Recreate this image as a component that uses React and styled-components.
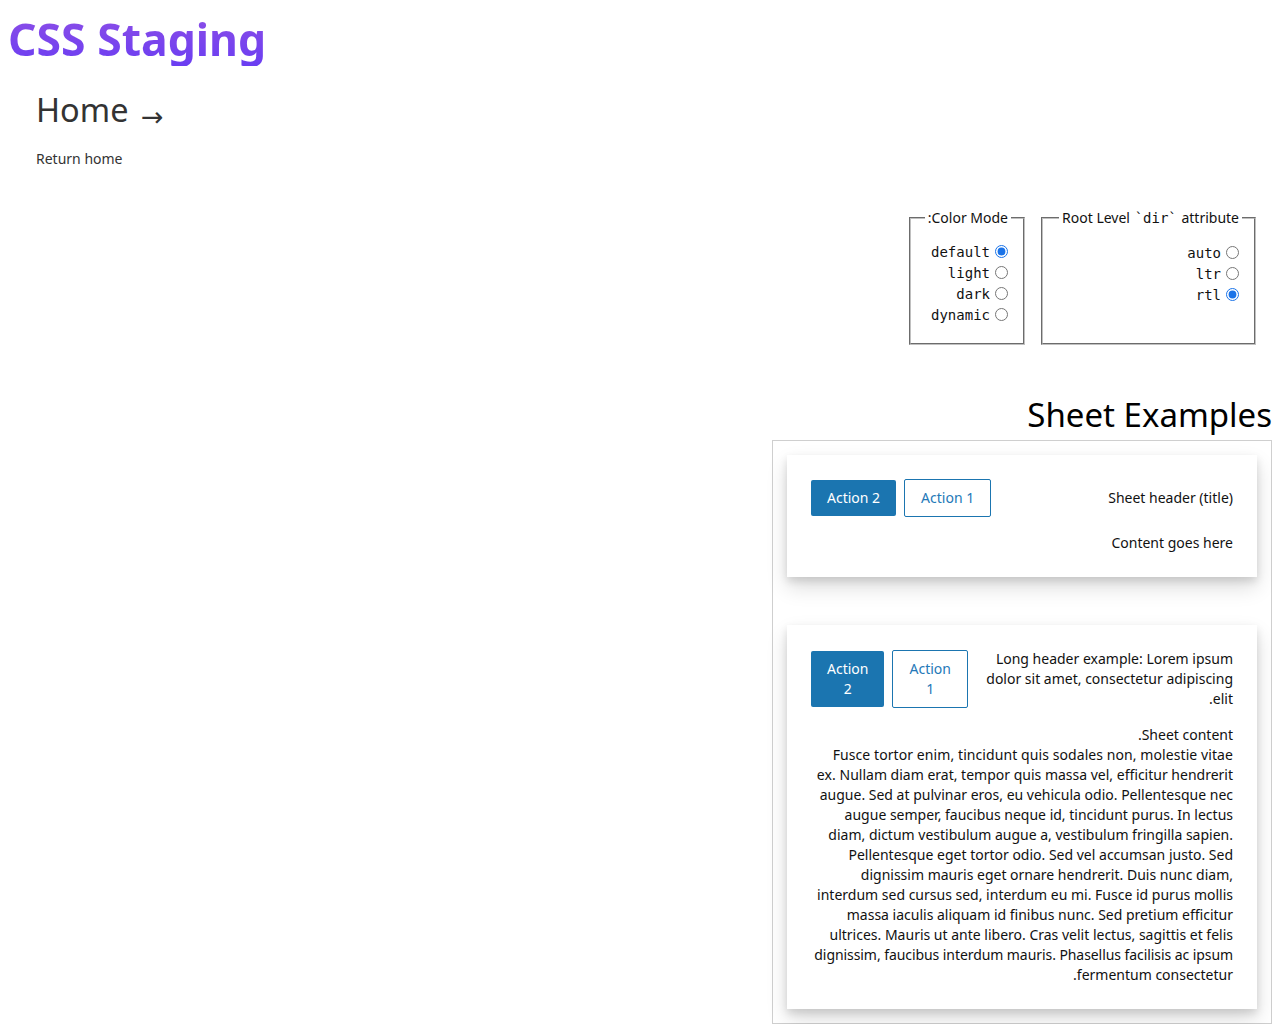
import React from 'react';
import styled, { createGlobalStyle } from 'styled-components';

const GlobalStyle = createGlobalStyle`
  body {
    margin: 8px;
    font-family: "Noto Sans", "Liberation Sans", sans-serif;
    color: #111;
    background: #fff;
  }
`;

const Header = styled.header`
  padding-top: 3px;
`;

const Title = styled.h1`
  margin: 0;
  display: inline-block;
  font-size: 44.5px;
  line-height: 55px;
  font-weight: 700;
  background: linear-gradient(180deg, #8e4fe6 0%, #6a3df2 100%);
  -webkit-background-clip: text;
  background-clip: text;
  color: transparent;
`;

const Nav = styled.nav`
  padding: 21px 28px 0;
`;

const HomeTitle = styled.h2`
  margin: 0;
  font-size: 32.5px;
  line-height: 46px;
  font-weight: 400;
  color: #333;
`;

const Arrow = styled.span`
  position: relative;
  top: 4px;
  font-family: "DejaVu Sans", sans-serif;
  font-size: 27px;
  line-height: 1;
  margin-left: 4px;
`;

const ReturnLink = styled.a`
  display: block;
  margin-top: 16px;
  font-size: 14px;
  line-height: 20px;
  color: #333;
  text-decoration: none;
`;

const Main = styled.main`
  margin-top: 39px;
`;

const Controls = styled.div`
  display: flex;
  gap: 16px;
  padding-inline-start: 16px;
`;

const Fieldset = styled.fieldset`
  box-sizing: border-box;
  margin: 0;
  padding: 6px 12px 10px;
  border: 2px groove #c0c0c0;
  width: ${({ $width }) => $width}px;
`;

const Legend = styled.legend`
  font-size: 14px;
  line-height: 19px;
  padding: 0 3px;
`;

const Code = styled.code`
  font-family: "DejaVu Sans Mono", "Liberation Mono", monospace;
  font-size: 14px;
  margin: 0 1px;
`;

const OptionGroup = styled.div`
  padding: 8px 0 8px;
`;

const Option = styled.label`
  display: flex;
  align-items: center;
  height: 21px;
  font-family: "DejaVu Sans Mono", "Liberation Mono", monospace;
  font-size: 14px;
  color: #111;
`;

const Radio = styled.input`
  width: 13px;
  height: 13px;
  margin: 0 3px 0 5px;
  accent-color: #1a73e8;
`;

const SectionTitle = styled.h2`
  margin: 48px 0 3px;
  font-size: 33px;
  line-height: 44px;
  font-weight: 400;
  color: #000;
`;

const SheetFrame = styled.div`
  width: 470px;
  padding: 14px;
  border: 1px solid #cfcfcf;
  display: flex;
  flex-direction: column;
  gap: 48px;
`;

const Sheet = styled.section`
  background: #fff;
  padding: 24px;
  box-shadow: 0 10px 20px rgba(0, 0, 0, 0.14), 0 4px 8px rgba(0, 0, 0, 0.12);
`;

const SheetHeader = styled.div`
  display: flex;
  align-items: center;
  justify-content: space-between;
  gap: 16px;
`;

const SheetTitle = styled.div`
  font-size: 14px;
  line-height: 20px;
  color: #111;
`;

const Actions = styled.div`
  display: flex;
  align-items: center;
  gap: 8px;
`;

const Button = styled.button`
  font-family: "Noto Sans", "Liberation Sans", sans-serif;
  font-size: 14px;
  line-height: 20px;
  padding: 8px 16px;
  border-radius: 2px;
  cursor: pointer;
  border: ${({ $primary }) => ($primary ? 'none' : '1px solid #1b75b0')};
  background: ${({ $primary }) => ($primary ? '#1b75b0' : '#fff')};
  color: ${({ $primary }) => ($primary ? '#fff' : '#2479b8')};
`;

const SheetContent = styled.div`
  margin-top: 16px;
  font-size: 14px;
  line-height: 20px;
  color: #111;
`;

const Paragraph = styled.p`
  margin: 0;
`;

// the original's glyph rounding makes some runs a hair wider or narrower,
// which decides where a few lines wrap
const Run = styled.span`
  letter-spacing: ${({ $spacing }) => $spacing}px;
`;

const colorModes = ['default', 'light', 'dark', 'dynamic'];
const dirs = ['auto', 'ltr', 'rtl'];

// rtl row: first child sits on the right
const SheetActions = () => (
  <Actions>
    <Button>Action 1</Button>
    <Button $primary>Action 2</Button>
  </Actions>
);

const App = () => (
  <>
    <GlobalStyle />
    <Header>
      <Title>CSS Staging</Title>
    </Header>
    <Nav>
      <HomeTitle>
        Home<Arrow> →</Arrow>
      </HomeTitle>
      <ReturnLink href="#">Return home</ReturnLink>
    </Nav>

    <Main dir="rtl">
      <Controls>
        <Fieldset $width={215}>
          <Legend>
            Root Level <Code>`dir`</Code> attribute
          </Legend>
          <OptionGroup>
            {dirs.map((d) => (
              <Option key={d}>
                <Radio type="radio" name="dir" defaultChecked={d === 'rtl'} />
                <span>{d}</span>
              </Option>
            ))}
          </OptionGroup>
        </Fieldset>
        <Fieldset $width={116}>
          <Legend>Color Mode:</Legend>
          <OptionGroup>
            {colorModes.map((m) => (
              <Option key={m}>
                <Radio type="radio" name="mode" defaultChecked={m === 'default'} />
                <span>{m}</span>
              </Option>
            ))}
          </OptionGroup>
        </Fieldset>
      </Controls>

      <SectionTitle>Sheet Examples</SectionTitle>
      <SheetFrame>
        <Sheet>
          <SheetHeader>
            <SheetTitle>Sheet header (title)</SheetTitle>
            <SheetActions />
          </SheetHeader>
          <SheetContent>Content goes here</SheetContent>
        </Sheet>
        <Sheet>
          <SheetHeader>
            <SheetTitle>
              Long header example: Lorem ipsum dolor sit amet, consectetur adipiscing elit.
            </SheetTitle>
            <SheetActions />
          </SheetHeader>
          <SheetContent>
            Sheet content.
            <Paragraph>
              <Run $spacing={0.08}>
                Fusce tortor enim, tincidunt quis sodales non, molestie vitae ex.
              </Run>{' '}
              Nullam diam erat, tempor quis massa vel, efficitur hendrerit augue. Sed at pulvinar
              eros, eu vehicula odio. Pellentesque nec augue semper, faucibus neque id, tincidunt
              purus. In lectus diam, dictum vestibulum augue a, vestibulum fringilla sapien.
              Pellentesque eget tortor odio. Sed vel accumsan justo. Sed dignissim mauris eget ornare
              hendrerit. Duis nunc diam, interdum sed cursus sed, interdum eu mi. Fusce id purus
              mollis massa iaculis aliquam id finibus nunc. Sed pretium efficitur ultrices. Mauris ut
              ante libero. Cras velit lectus, sagittis et felis{' '}
              <Run $spacing={-0.07}>
                dignissim, faucibus interdum mauris. Phasellus facilisis ac ipsum
              </Run>{' '}
              fermentum consectetur.
            </Paragraph>
          </SheetContent>
        </Sheet>
      </SheetFrame>
    </Main>
  </>
);

export default App;
